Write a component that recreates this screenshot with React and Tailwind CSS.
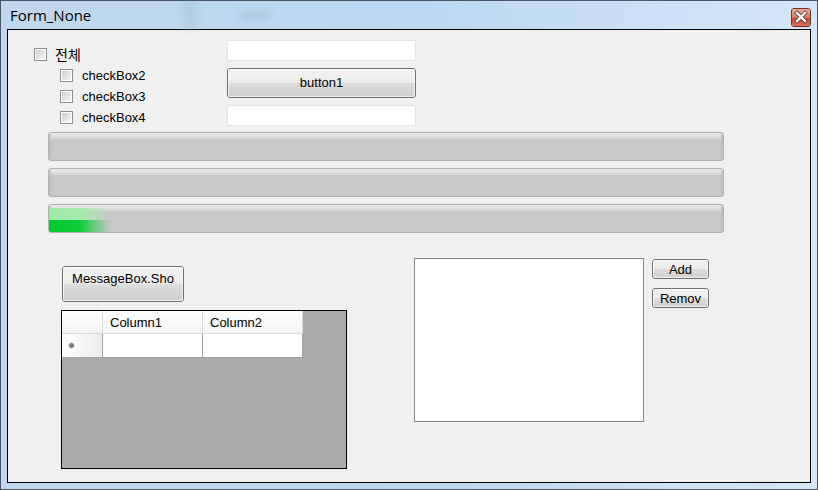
import React from "react";

function Box() {
  return (
    <div className="w-[13px] h-[13px] border border-[#8e8f8f] bg-white p-[1px] box-border">
      <div className="w-full h-full bg-gradient-to-br from-[#cfcfcf] to-[#f6f6f6]" />
    </div>
  );
}

function Check({ label }) {
  return (
    <div className="flex items-center h-[13px]">
      <Box />
      <span className="ml-[9px] text-[13px] leading-none text-black">{label}</span>
    </div>
  );
}

function WinButton({ children, className = "", textClass = "" }) {
  return (
    <div
      className={`relative border border-[#707070] rounded-[3px] overflow-hidden box-border ${className}`}
    >
      <div className="absolute inset-0 flex flex-col">
        <div className="flex-1 bg-gradient-to-b from-[#f2f2f2] to-[#ebebeb]" />
        <div className="flex-1 bg-gradient-to-b from-[#dddddd] to-[#cfcfcf]" />
      </div>
      <div className="absolute inset-0 border border-[#fcfcfc] rounded-[2px] opacity-70" />
      <div className={`relative flex justify-center text-[13px] leading-none text-black h-full ${textClass}`}>
        {children}
      </div>
    </div>
  );
}

function Progress({ green = false }) {
  return (
    <div className="relative w-[676px] h-[29px] border border-[#b2b2b2] rounded-[3px] overflow-hidden box-border bg-[#c9c9c9]">
      <div className="absolute left-0 right-0 top-0 h-[6px] bg-gradient-to-b from-[#ececec] to-[#d4d4d4]" />
      <div className="absolute left-0 top-0 bottom-0 w-[3px] bg-gradient-to-r from-[#bbbbbb] to-transparent" />
      <div className="absolute right-0 top-0 bottom-0 w-[3px] bg-gradient-to-l from-[#bbbbbb] to-transparent" />
      {green && (
        <>
          <div className="absolute left-0 top-[3px] h-[12px] w-[62px] bg-gradient-to-r from-[#9ee9a6] via-[#a6eaae] to-transparent" />
          <div className="absolute left-0 top-[15px] bottom-0 w-[62px] bg-gradient-to-r from-[#00c82c] via-[#10cc3a] to-transparent" />
        </>
      )}
    </div>
  );
}

export default function App() {
  return (
    <div className="w-[818px] h-[490px] flex flex-col border border-[#4b5664] bg-gradient-to-r from-[#c0d8ee] via-[#bcd8f2] to-[#d4e6f7] box-border font-['Liberation_Sans',Arial,sans-serif] overflow-hidden">
      {/* Title bar */}
      <div className="relative h-[28px] flex items-center">
        <div className="absolute left-[182px] top-0 w-[14px] h-[28px] bg-[#9fb8cf] opacity-40 blur-[4px]" />
        <div className="absolute left-[238px] top-[10px] w-[32px] h-[9px] bg-[#9cb3c8] opacity-40 blur-[3px]" />
        <span className="relative ml-[9px] mt-[1px] text-[15px] text-black font-['Open_Sans','Noto_Sans',sans-serif] leading-none">
          Form_None
        </span>
        <div className="relative ml-auto mr-[6px] mt-[5px] w-[20px] h-[19px] rounded-[3px] border border-[#6e3325] overflow-hidden box-border">
          <div className="absolute inset-0 flex flex-col">
            <div className="flex-1 bg-gradient-to-b from-[#e9a997] to-[#d67560]" />
            <div className="flex-1 bg-gradient-to-b from-[#c7442a] to-[#d8715a]" />
          </div>
          <svg className="absolute inset-0" width="18" height="17" viewBox="0 0 18 17">
            <path d="M5 4 L13 12 M13 4 L5 12" stroke="#5a3a34" strokeWidth="4" strokeLinecap="square" />
            <path d="M5 4 L13 12 M13 4 L5 12" stroke="#ffffff" strokeWidth="2.4" strokeLinecap="square" />
          </svg>
        </div>
      </div>

      {/* Body */}
      <div className="flex-1 px-[6px] pb-[6px] flex flex-col">
        <div className="flex-1 border border-black bg-[#f0f0f0] flex flex-col">
          {/* Top section */}
          <div className="flex items-start">
            <div className="w-[219px] pl-[26px] pt-[17px]">
              <div className="flex items-center h-[14px]">
                <Box />
                <span className="ml-[8px] text-[14px] leading-none text-black font-['Noto_Sans_CJK_KR',sans-serif]">
                  전체
                </span>
              </div>
              <div className="pl-[26px] mt-[8px] flex flex-col gap-[8px]">
                <Check label="checkBox2" />
                <Check label="checkBox3" />
                <Check label="checkBox4" />
              </div>
            </div>
            <div className="w-[189px] pt-[10px] flex flex-col">
              <div className="h-[21px] bg-white border border-[#e3e3e3] rounded-[2px] box-border" />
              <WinButton className="mt-[7px] h-[30px]" textClass="items-center pb-[1px]">
                button1
              </WinButton>
              <div className="mt-[7px] h-[21px] bg-white border border-[#e3e3e3] rounded-[2px] box-border" />
            </div>
          </div>

          {/* Progress bars */}
          <div className="ml-[40px] mt-[6px] flex flex-col gap-[7px]">
            <Progress />
            <Progress />
            <Progress green />
          </div>

          {/* Bottom section */}
          <div className="flex items-start">
            <div className="ml-[53px] w-[286px] flex flex-col">
              <WinButton className="ml-[1px] mt-[33px] w-[122px] h-[36px]" textClass="items-start pt-[5px]">
                MessageBox.Sho
              </WinButton>
              <div className="mt-[8px] w-[286px] h-[159px] border border-black bg-[#ababab] box-border">
                <div className="flex h-[23px]">
                  <div className="w-[41px] h-full bg-gradient-to-b from-white to-[#f3f3f3] border-r border-b border-[#d8d8d8] box-border" />
                  <div className="w-[100px] h-full bg-gradient-to-b from-white to-[#f3f3f3] border-r border-b border-[#d8d8d8] box-border flex items-center pl-[7px] text-[13px] leading-none">
                    Column1
                  </div>
                  <div className="w-[100px] h-full bg-gradient-to-b from-white to-[#f3f3f3] border-r border-b border-[#d8d8d8] box-border flex items-center pl-[7px] text-[13px] leading-none">
                    Column2
                  </div>
                </div>
                <div className="flex h-[24px]">
                  <div className="w-[41px] h-full bg-gradient-to-r from-white to-[#ececec] border-r border-b border-[#a0a0a0] box-border flex items-center pl-[6px]">
                    <svg width="7" height="7" viewBox="0 0 7 7">
                      <circle cx="3.5" cy="3.5" r="2.3" fill="#3a3a3a" />
                      <path d="M3.5 0.5 V6.5 M0.5 3.5 H6.5 M1.4 1.4 L5.6 5.6 M5.6 1.4 L1.4 5.6" stroke="#8a8a8a" strokeWidth="0.8" />
                    </svg>
                  </div>
                  <div className="w-[100px] h-full bg-white border-r border-b border-[#a0a0a0] box-border" />
                  <div className="w-[100px] h-full bg-white border-r border-b border-[#a0a0a0] box-border" />
                </div>
              </div>
            </div>

            <div className="ml-[67px] mt-[25px] w-[230px] h-[164px] bg-white border border-[#828790] box-border" />

            <div className="ml-[8px] mt-[26px] flex flex-col gap-[9px]">
              <WinButton className="w-[57px] h-[20px]" textClass="items-center">
                Add
              </WinButton>
              <WinButton className="w-[57px] h-[20px]" textClass="items-center">
                Remov
              </WinButton>
            </div>
          </div>
        </div>
      </div>
    </div>
  );
}
